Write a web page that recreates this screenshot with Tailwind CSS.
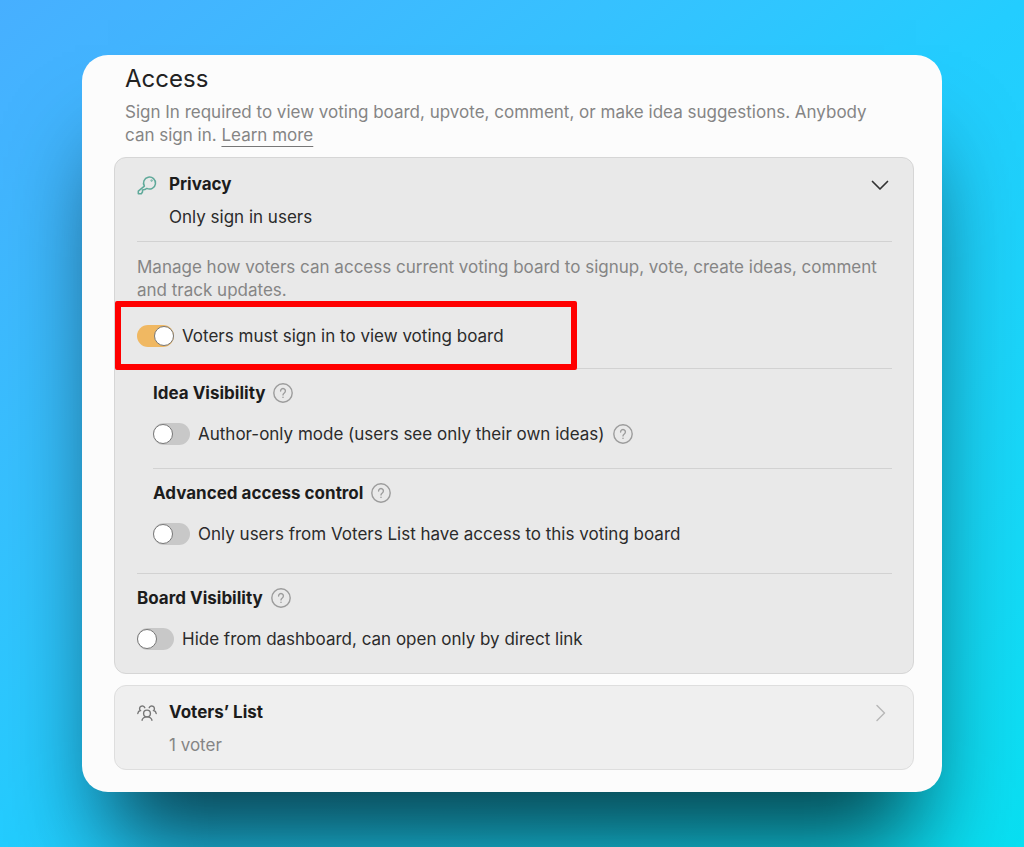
<!DOCTYPE html>
<html lang="en">
<head>
    <meta charset="UTF-8">
    <meta name="viewport" content="width=device-width, initial-scale=1.0">
    <title>Access settings</title>
    <script src="https://cdn.jsdelivr.net/npm/@tailwindcss/browser@4"></script>
</head>
<body class="min-h-screen bg-linear-to-br from-[#47afff] via-[#23cdff] to-[#08e0f2] px-8 py-[55px] font-['Inter',sans-serif] text-[17px] leading-6 text-[#2b2b2b] antialiased">

    <!-- Settings card -->
    <main class="mx-auto max-w-[860px] rounded-[26px] bg-[#fcfcfc] pr-7 pl-8 pt-2 pb-[22px] shadow-[0_76px_92px_-26px_rgba(0,0,0,0.7)]">
        <header class="pr-8 pl-[11px]">
            <h1 class="text-2xl leading-8 text-[#222]">Access</h1>
            <p class="mt-[6px] leading-[23px] text-[#858585]">
                Sign In required to view voting board, upvote, comment, or make idea suggestions. Anybody can sign in.
                <a href="#" class="underline decoration-[#777] decoration-1 underline-offset-[5px]">Learn more</a>
            </p>
        </header>

        <!-- Privacy -->
        <section class="mt-[10px] rounded-xl border border-[#d6d6d6] bg-[#e9e9e9] pt-[14px] pr-[21px] pb-[22px] pl-[22px]">
            <button type="button" aria-expanded="true" class="flex w-full items-start text-left">
                <svg class="mt-[3px] size-5 text-[#5fa99a]" viewBox="0 0 20 20" fill="none" stroke="currentColor" stroke-width="1.5" stroke-linejoin="round" aria-hidden="true">
                    <path d="M7.4 11.2a6 6 0 1 1 2.4 2.200l-2 1.200-2.300.4v2l-1.200 1.700H1.300v-2.600z" />
                    <circle cx="14.600" cy="5.600" r=".4" />
                </svg>
                <span class="ml-3 flex-1">
                    <span class="block font-bold text-[#1c1c1c]">Privacy</span>
                    <span class="mt-[9px] block">Only sign in users</span>
                </span>
                <svg class="mt-[3px] mr-[2px] size-5 text-[#333]" viewBox="0 0 20 20" fill="none" stroke="currentColor" stroke-width="1.7" stroke-linecap="round" stroke-linejoin="round" aria-hidden="true">
                    <path d="M2.5 6.500l7.500 7.500 7.500-7.500" />
                </svg>
            </button>

            <p class="mt-3 border-t border-[#d2d2d2] pt-[14px] leading-[23px] text-[#858585]">
                Manage how voters can access current voting board to signup, vote, create ideas, comment and track updates.
            </p>

            <div class="relative mt-[22px] flex items-center">
                <input id="must-sign-in" type="checkbox" role="switch" checked class="flex h-[22px] w-[37px] shrink-0 appearance-none items-center rounded-full bg-[#c8c8c8] before:block before:size-[20px] before:rounded-full before:border before:border-[#777] before:bg-white checked:bg-[#f0b862] checked:before:ml-[17px]">
                <label for="must-sign-in" class="ml-2">Voters must sign in to view voting board</label>
                <!-- Highlight frame -->
                <div class="pointer-events-none absolute -top-[23px] -left-[22px] h-[69px] w-[462px] rounded-xs border-6 border-[#ff0000]"></div>
            </div>

            <div class="mt-5 border-t border-[#d2d2d2] pt-3 pl-4">
                <div class="flex items-center gap-2">
                    <h2 class="font-bold text-[#1c1c1c]">Idea Visibility</h2>
                    <button type="button" aria-label="About idea visibility" class="text-[#9c9c9c]">
                        <svg class="size-5" viewBox="0 0 20 20" fill="none" stroke="currentColor" stroke-width="1.4" stroke-linecap="round"><circle cx="10" cy="10" r="9.2" /><path d="M7.6 8a2.4 2.4 0 1 1 3.7 2c-.8.5-1.3.9-1.3 1.9" /><path d="M10 14.3v.1" /></svg>
                    </button>
                </div>
                <div class="mt-[17px] flex items-center">
                    <input id="author-only" type="checkbox" role="switch" class="flex h-[22px] w-[37px] shrink-0 appearance-none items-center rounded-full bg-[#c8c8c8] before:block before:size-[20px] before:rounded-full before:border before:border-[#777] before:bg-white checked:bg-[#f0b862] checked:before:ml-[17px]">
                    <label for="author-only" class="ml-2">Author-only mode (users see only their own ideas)</label>
                    <button type="button" aria-label="About author-only mode" class="ml-2 text-[#9c9c9c]">
                        <svg class="size-5" viewBox="0 0 20 20" fill="none" stroke="currentColor" stroke-width="1.4" stroke-linecap="round"><circle cx="10" cy="10" r="9.2" /><path d="M7.6 8a2.4 2.4 0 1 1 3.7 2c-.8.5-1.3.9-1.3 1.9" /><path d="M10 14.3v.1" /></svg>
                    </button>
                </div>

                <div class="mt-[22px] flex items-center gap-2 border-t border-[#d2d2d2] pt-3">
                    <h2 class="font-bold text-[#1c1c1c]">Advanced access control</h2>
                    <button type="button" aria-label="About advanced access control" class="text-[#9c9c9c]">
                        <svg class="size-5" viewBox="0 0 20 20" fill="none" stroke="currentColor" stroke-width="1.4" stroke-linecap="round"><circle cx="10" cy="10" r="9.2" /><path d="M7.6 8a2.4 2.4 0 1 1 3.7 2c-.8.5-1.3.9-1.3 1.9" /><path d="M10 14.3v.1" /></svg>
                    </button>
                </div>
                <div class="mt-[17px] flex items-center">
                    <input id="voters-list-only" type="checkbox" role="switch" class="flex h-[22px] w-[37px] shrink-0 appearance-none items-center rounded-full bg-[#c8c8c8] before:block before:size-[20px] before:rounded-full before:border before:border-[#777] before:bg-white checked:bg-[#f0b862] checked:before:ml-[17px]">
                    <label for="voters-list-only" class="ml-2">Only users from Voters List have access to this voting board</label>
                </div>
            </div>

            <div class="mt-[27px] border-t border-[#d2d2d2] pt-3">
                <div class="flex items-center gap-2">
                    <h2 class="font-bold text-[#1c1c1c]">Board Visibility</h2>
                    <button type="button" aria-label="About board visibility" class="text-[#9c9c9c]">
                        <svg class="size-5" viewBox="0 0 20 20" fill="none" stroke="currentColor" stroke-width="1.4" stroke-linecap="round"><circle cx="10" cy="10" r="9.2" /><path d="M7.6 8a2.4 2.4 0 1 1 3.7 2c-.8.5-1.3.9-1.3 1.9" /><path d="M10 14.3v.1" /></svg>
                    </button>
                </div>
                <div class="mt-[17px] flex items-center">
                    <input id="hide-board" type="checkbox" role="switch" class="flex h-[22px] w-[37px] shrink-0 appearance-none items-center rounded-full bg-[#c8c8c8] before:block before:size-[20px] before:rounded-full before:border before:border-[#777] before:bg-white checked:bg-[#f0b862] checked:before:ml-[17px]">
                    <label for="hide-board" class="ml-2">Hide from dashboard, can open only by direct link</label>
                </div>
            </div>
        </section>

        <!-- Voters' list -->
        <button type="button" class="mt-[11px] flex w-full items-start rounded-xl border border-[#dedede] bg-[#efefef] pt-[14px] pr-[21px] pb-3 pl-[22px] text-left">
            <svg class="mt-[3px] size-5 text-[#777]" viewBox="0 0 20 20" fill="none" stroke="currentColor" stroke-width="1.4" stroke-linecap="round" aria-hidden="true">
                <circle cx="10" cy="10.5" r="3.4" />
                <path d="M5 17.200c.6-2 2.500-3.300 5-3.300s4.400 1.300 5 3.300" />
                <path d="M.8 10.500c.2-1.600 1-2.600 2.500-3A2.700 2.700 0 1 1 7.800 4.700" />
                <path d="M19.200 10.500c-.2-1.600-1-2.600-2.500-3A2.700 2.700 0 1 0 12.200 4.700" />
            </svg>
            <span class="ml-3 flex-1">
                <span class="block font-bold text-[#1c1c1c]">Voters’ List</span>
                <span class="mt-[9px] block text-[#858585]">1 voter</span>
            </span>
            <svg class="mt-[3px] mr-[2px] size-5 text-[#b8b8b8]" viewBox="0 0 20 20" fill="none" stroke="currentColor" stroke-width="1.5" stroke-linecap="round" stroke-linejoin="round" aria-hidden="true">
                <path d="M7 2.500l7.500 7.500-7.500 7.500" />
            </svg>
        </button>
    </main>

</body>
</html>
